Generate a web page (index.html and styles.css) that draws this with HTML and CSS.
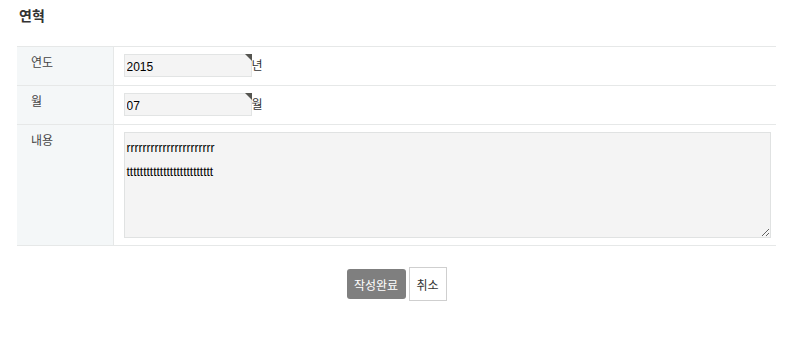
FILE: index.html
```html
<!DOCTYPE html>
<html lang="ko">
<head>
<meta charset="utf-8">
<link rel="stylesheet" href="styles.css">
</head>
<body>
<div class="page">
  <h2 class="title">연혁</h2>
  <table class="form">
    <tr>
      <th>연도</th>
      <td><span class="sel"><input class="field" type="text" value="2015"></span><span class="unit">년</span></td>
    </tr>
    <tr>
      <th>월</th>
      <td><span class="sel"><input class="field" type="text" value="07"></span><span class="unit">월</span></td>
    </tr>
    <tr>
      <th>내용</th>
      <td><textarea class="area">rrrrrrrrrrrrrrrrrrrrrr
tttttttttttttttttttttttttt</textarea></td>
    </tr>
  </table>
  <div class="actions">
    <button class="btn primary" type="button">작성완료</button>
    <button class="btn plain" type="button">취소</button>
  </div>
</div>
</body>
</html>
```
FILE: styles.css
```css
* { box-sizing: border-box; }
body {
  margin: 0;
  font-family: "Liberation Sans", "Noto Sans CJK KR", sans-serif;
  font-size: 12px;
  color: #333;
  background: #fff;
}
.page {
  padding: 0 19px 0 17px;
}
.title {
  margin: 0;
  padding: 7px 0 0 2px;
  height: 46px;
  font-size: 14px;
  font-weight: bold;
  color: #333;
  line-height: 18px;
}
.form {
  width: 100%;
  border-collapse: collapse;
}
.form th, .form td {
  border-top: 1px solid #e6e8e8;
  border-bottom: 1px solid #e6e8e8;
}
.form th {
  width: 96px;
  background: #f4f7f8;
  border-right: 1px solid #e6e8e8;
  text-align: left;
  vertical-align: top;
  font-weight: normal;
  color: #444;
  padding: 9px 0 0 14px;
  line-height: 14px;
}
.form td {
  padding: 7px 4px 7px 10px;
  height: 38px;
  line-height: 23px;
}
.sel {
  position: relative;
  display: inline-block;
  vertical-align: top;
}
.sel::after {
  content: "";
  position: absolute;
  right: 0;
  top: 0;
  width: 0;
  height: 0;
  border-top: 7px solid #555550;
  border-left: 7px solid transparent;
}
.field {
  display: block;
  width: 128px;
  height: 23px;
  margin: 0;
  padding: 2px 0 0 2px;
  border: 1px solid #e2e4e4;
  background: #f4f4f4;
  font-family: "Liberation Sans", "Noto Sans CJK KR", sans-serif;
  font-size: 12px;
  color: #000;
  outline: none;
}
.unit {
  display: inline-block;
  vertical-align: top;
  padding-top: 1px;
  color: #333;
}
.area {
  display: block;
  width: 647px;
  height: 106px;
  margin: 0;
  padding: 3px 2px;
  border: 1px solid #e0e2e2;
  background: #f4f4f4;
  font-family: "Liberation Sans", "Noto Sans CJK KR", sans-serif;
  font-size: 12px;
  line-height: 24px;
  color: #000;
  outline: none;
  resize: both;
}
.actions {
  display: flex;
  justify-content: center;
  align-items: center;
  gap: 3px;
  padding: 21px 0 0 0;
}
.btn {
  margin: 0;
  font-family: "Noto Sans CJK KR", "Liberation Sans", sans-serif;
  font-size: 12px;
  cursor: pointer;
}
.primary {
  width: 59px;
  height: 30px;
  padding: 0;
  border: none;
  border-radius: 3px;
  background: #7f7f7f;
  color: #fff;
}
.plain {
  width: 38px;
  height: 34px;
  padding: 0;
  border: 1px solid #cfcfcf;
  background: #fff;
  color: #333;
}
```
